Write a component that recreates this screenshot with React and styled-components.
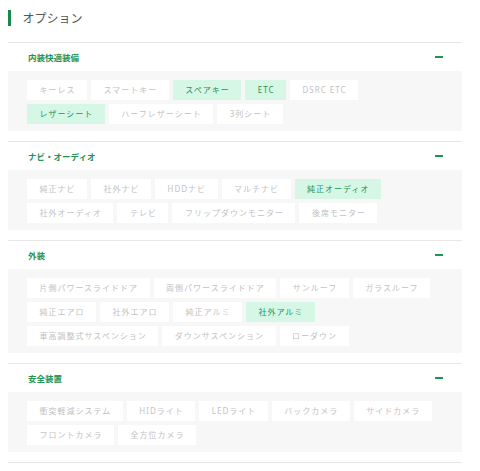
import React from "react";
import styled, { createGlobalStyle } from "styled-components";

const GlobalStyle = createGlobalStyle`
  * { box-sizing: border-box; }
  body {
    margin: 0;
    background: #fff;
    font-family: "Noto Sans", "Noto Sans CJK JP", sans-serif;
  }
`;

const groups = [
  {
    title: "内装快適装備",
    items: [
      ["キーレス"],
      ["スマートキー"],
      ["スペアキー", true],
      ["ETC", true],
      ["DSRC ETC"],
      ["レザーシート", true],
      ["ハーフレザーシート"],
      ["3列シート"],
    ],
  },
  {
    title: "ナビ・オーディオ",
    items: [
      ["純正ナビ"],
      ["社外ナビ"],
      ["HDDナビ"],
      ["マルチナビ"],
      ["純正オーディオ", true],
      ["社外オーディオ"],
      ["テレビ"],
      ["フリップダウンモニター"],
      ["後席モニター"],
    ],
  },
  {
    title: "外装",
    items: [
      ["片側パワースライドドア"],
      ["両側パワースライドドア"],
      ["サンルーフ"],
      ["ガラスルーフ"],
      ["純正エアロ"],
      ["社外エアロ"],
      ["純正アルミ"],
      ["社外アルミ", true],
      ["車高調整式サスペンション"],
      ["ダウンサスペンション"],
      ["ローダウン"],
    ],
  },
  {
    title: "安全装置",
    items: [
      ["衝突軽減システム"],
      ["HIDライト"],
      ["LEDライト"],
      ["バックカメラ"],
      ["サイドカメラ"],
      ["フロントカメラ"],
      ["全方位カメラ"],
    ],
  },
];

const App = () => {
  return (
    <>
      <GlobalStyle />
      <Wrapper>
        <Header>
          <Title>オプション</Title>
        </Header>
        {groups.map((group) => (
          <Section key={group.title}>
            <SectionHead>
              <SectionTitle>{group.title}</SectionTitle>
              <Minus />
            </SectionHead>
            <Panel>
              {group.items.map(([label, active]) => (
                <Chip key={label} active={active}>
                  {label}
                </Chip>
              ))}
            </Panel>
          </Section>
        ))}
        <BottomLine />
      </Wrapper>
    </>
  );
};

const Wrapper = styled.div`
  width: 454px;
  margin-left: 8px;
`;

const Header = styled.div`
  height: 42px;
  padding-top: 10px;
`;

const Title = styled.h2`
  margin: 0;
  height: 16px;
  display: flex;
  align-items: center;
  gap: 12px;
  font-size: 12px;
  font-weight: 400;
  color: #555;

  &::before {
    content: "";
    width: 2.5px;
    height: 16px;
    background: #17884a;
  }
`;

const Section = styled.section`
  border-top: 1px solid #e6e6e6;
  margin-bottom: 10px;
`;

const SectionHead = styled.div`
  height: 28px;
  display: flex;
  align-items: center;
  justify-content: space-between;
  padding: 0 19px 0 20px;
`;

const SectionTitle = styled.h3`
  margin: 0;
  font-size: 8.5px;
  font-weight: 700;
  color: #1f9455;
`;

const Minus = styled.span`
  width: 8px;
  height: 1.5px;
  background: #1f9455;
`;

const Panel = styled.div`
  background: #f7f7f7;
  padding: 9px 26px 7px 19px;
  display: flex;
  flex-wrap: wrap;
  gap: 4px;
`;

const Chip = styled.span`
  height: 20px;
  line-height: 20px;
  padding: 0 11.5px 0 12.5px;
  font-size: 8px;
  letter-spacing: 1px;
  white-space: nowrap;
  background: ${(props) => (props.active ? "#d6f7e6" : "#fff")};
  color: ${(props) => (props.active ? "#23935a" : "#c2c2c2")};
`;

const BottomLine = styled.div`
  border-top: 1px solid #e6e6e6;
`;

export default App;
